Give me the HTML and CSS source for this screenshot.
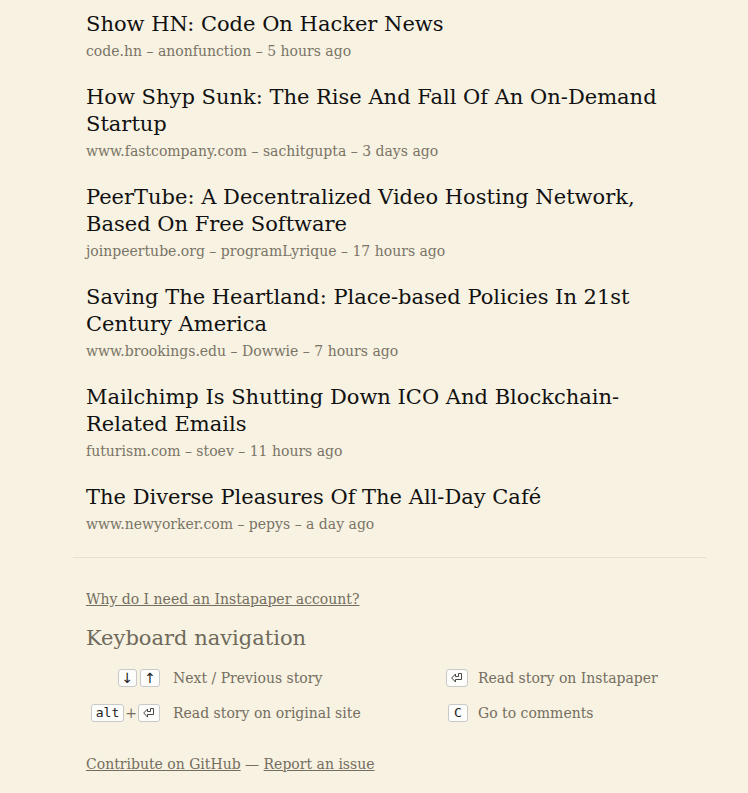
FILE: index.html
```html
<!DOCTYPE html>
<html lang="en">
  <head>
    <meta charset="UTF-8" />
    <meta name="viewport" content="width=device-width, initial-scale=1.0" />
    <title>Code On Hacker News</title>
    <link rel="stylesheet" href="styles.css">
  </head>
  <body>
    <div class="page">
      <ul class="stories">
        <li class="story">
          <a class="title" href="#">Show HN: Code On Hacker News</a>
          <div class="meta">code.hn &ndash; anonfunction &ndash; 5 hours ago</div>
        </li>
        <li class="story">
          <a class="title" href="#">How Shyp Sunk: The Rise And Fall Of An On-Demand Startup</a>
          <div class="meta">www.fastcompany.com &ndash; sachitgupta &ndash; 3 days ago</div>
        </li>
        <li class="story">
          <a class="title" href="#">PeerTube: A Decentralized Video Hosting Network, Based On Free Software</a>
          <div class="meta">joinpeertube.org &ndash; programLyrique &ndash; 17 hours ago</div>
        </li>
        <li class="story">
          <a class="title" href="#">Saving The Heartland: Place-based Policies In 21st Century America</a>
          <div class="meta">www.brookings.edu &ndash; Dowwie &ndash; 7 hours ago</div>
        </li>
        <li class="story">
          <a class="title" href="#">Mailchimp Is Shutting Down ICO And Blockchain-Related Emails</a>
          <div class="meta">futurism.com &ndash; stoev &ndash; 11 hours ago</div>
        </li>
        <li class="story">
          <a class="title" href="#">The Diverse Pleasures Of The All-Day Café</a>
          <div class="meta">www.newyorker.com &ndash; pepys &ndash; a day ago</div>
        </li>
      </ul>

      <hr class="divider">

      <div class="about">
        <p class="why"><a href="#">Why do I need an Instapaper account?</a></p>

        <h2>Keyboard navigation</h2>
        <div class="keys">
          <div class="combo"><kbd class="arrow">&darr;</kbd><kbd class="arrow">&uarr;</kbd></div>
          <div class="action">Next / Previous story</div>
          <div class="combo"><kbd><svg class="enter" viewBox="0 0 12 10" width="12" height="10"><path d="M10.5 0.5 L10.5 6.5 L4.5 6.5 L4.5 9 L0.7 5 L4.5 1 L4.5 3.5 L7.5 3.5 L7.5 0.5 Z" fill="none" stroke="#333" stroke-width="0.9" stroke-linejoin="round"/></svg></kbd></div>
          <div class="action">Read story on Instapaper</div>

          <div class="combo"><kbd>alt</kbd><span class="plus">+</span><kbd><svg class="enter" viewBox="0 0 12 10" width="12" height="10"><path d="M10.5 0.5 L10.5 6.5 L4.5 6.5 L4.5 9 L0.7 5 L4.5 1 L4.5 3.5 L7.5 3.5 L7.5 0.5 Z" fill="none" stroke="#333" stroke-width="0.9" stroke-linejoin="round"/></svg></kbd></div>
          <div class="action">Read story on original site</div>
          <div class="combo"><kbd>C</kbd></div>
          <div class="action">Go to comments</div>
        </div>

        <p class="links"><a href="#">Contribute on GitHub</a> &mdash; <a href="#">Report an issue</a></p>
      </div>
    </div>
  </body>
</html>
```

FILE: styles.css
```css
* {
  margin: 0;
  padding: 0;
}

body {
  background: #f8f2e2;
  font-family: "DejaVu Serif", Georgia, serif;
  color: #746e60;
}

a {
  color: inherit;
}

.page {
  width: 633px;
  margin-left: 73px;
  padding-top: 11px;
  padding-bottom: 20px;
}

/* story list */
.stories {
  list-style: none;
  padding: 0 13px;
}

.story {
  margin-bottom: 23px;
}

.story:last-child {
  margin-bottom: 0;
}

.title {
  display: block;
  font-size: 21px;
  line-height: 27px;
  color: #111;
  text-decoration: none;
}

.meta {
  margin-top: 3px;
  font-size: 14px;
  line-height: 20px;
  color: #7a7466;
}

.divider {
  border: none;
  border-top: 1px solid #e8e0cc;
  margin: 23px 0 31px;
}

/* about / keyboard help */
.about {
  padding: 0 13px;
  font-size: 14px;
  line-height: 20px;
}

.about h2 {
  margin-top: 16px;
  font-size: 21px;
  line-height: 27px;
  font-weight: normal;
  color: #6f6a5b;
}

.keys {
  display: grid;
  grid-template-columns: 87px 271px 34px 1fr;
  grid-auto-rows: 35px;
  align-items: center;
  margin-top: 8px;
}

.combo {
  display: flex;
  justify-content: flex-end;
  align-items: center;
  gap: 3px;
  padding-right: 13px;
}

.keys .combo:nth-child(4n+3) {
  padding-right: 10px;
}

kbd {
  display: inline-flex;
  align-items: center;
  justify-content: center;
  min-width: 10px;
  height: 16px;
  padding: 0 4px;
  border: 1px solid #c9c9c9;
  border-radius: 3px;
  background: #fdfdfc;
  font-family: "DejaVu Sans Mono", monospace;
  font-size: 13px;
  color: #222;
}

kbd.arrow {
  font-family: "DejaVu Sans", sans-serif;
  font-size: 14px;
  padding: 0 3px;
}

.plus {
  margin: 0 -2px;
}

.links {
  margin-top: 24px;
}
```
